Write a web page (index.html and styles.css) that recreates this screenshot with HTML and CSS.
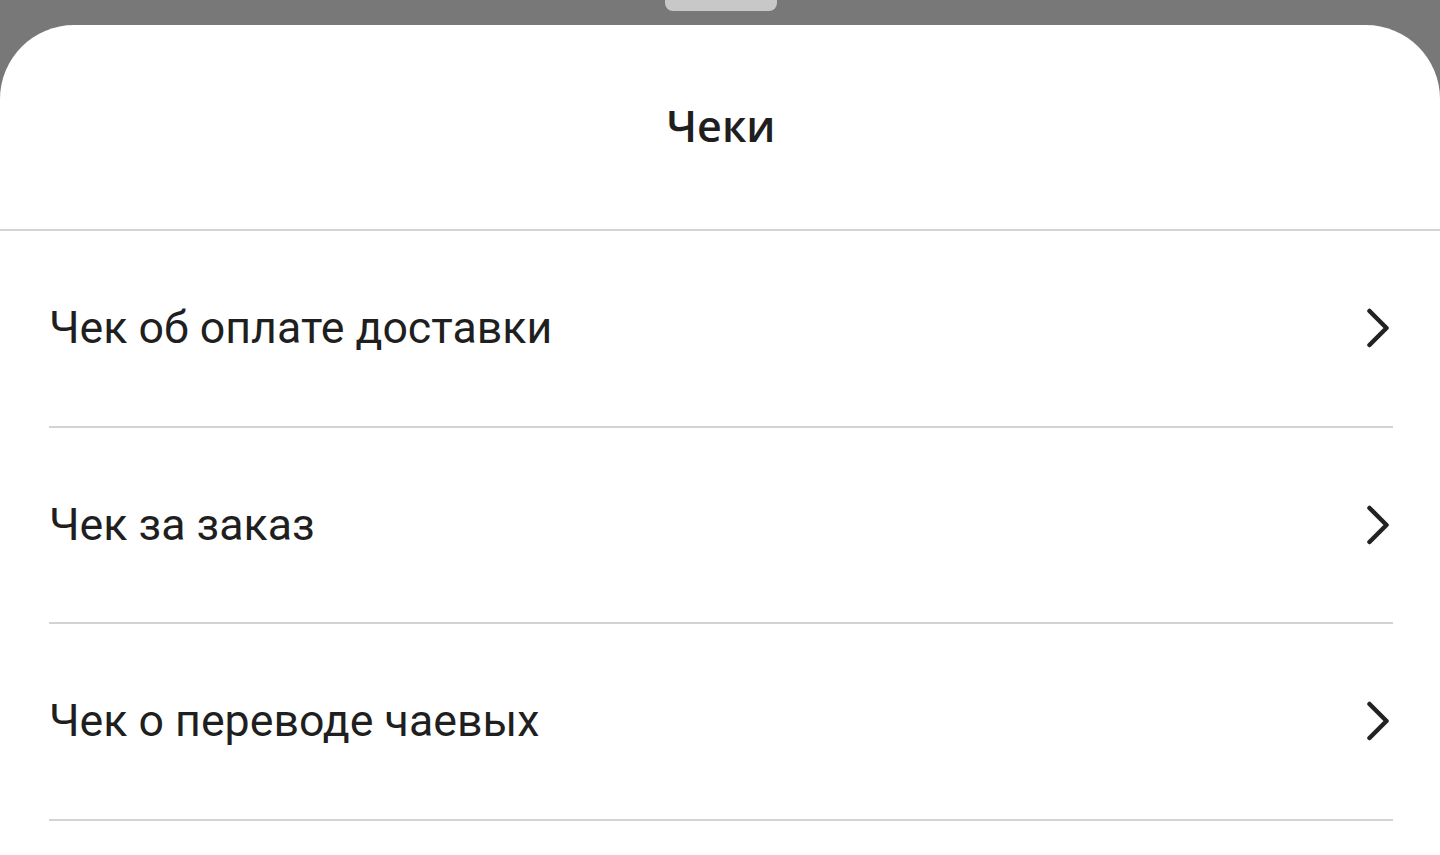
FILE: index.html
```html
<!DOCTYPE html>
<html lang="ru">
<head>
<meta charset="utf-8">
<title>Чеки</title>
<link rel="stylesheet" href="styles.css">
</head>
<body>
<div class="screen">
  <div class="handle"></div>
  <div class="sheet">
    <header class="sheet-header">
      <h1 class="title">Чеки</h1>
    </header>
    <ul class="list">
      <li class="row">
        <span class="row-label">Чек об оплате доставки</span>
        <svg class="chevron" viewBox="0 0 24 40" width="24" height="40"><path d="M3.5 3 L20.5 20 L3.5 37" fill="none" stroke="#222" stroke-width="4.5" stroke-linecap="round" stroke-linejoin="round"/></svg>
      </li>
      <li class="row">
        <span class="row-label">Чек за заказ</span>
        <svg class="chevron" viewBox="0 0 24 40" width="24" height="40"><path d="M3.5 3 L20.5 20 L3.5 37" fill="none" stroke="#222" stroke-width="4.5" stroke-linecap="round" stroke-linejoin="round"/></svg>
      </li>
      <li class="row">
        <span class="row-label">Чек о переводе чаевых</span>
        <svg class="chevron" viewBox="0 0 24 40" width="24" height="40"><path d="M3.5 3 L20.5 20 L3.5 37" fill="none" stroke="#222" stroke-width="4.5" stroke-linecap="round" stroke-linejoin="round"/></svg>
      </li>
    </ul>
  </div>
</div>
</body>
</html>
```
FILE: styles.css
```css
* { box-sizing: border-box; }
html, body { margin: 0; padding: 0; }
body {
  background: #787878;
  width: 1440px;
  height: 855px;
  overflow: hidden;
  font-family: Roboto, "Noto Sans", sans-serif;
  color: #222;
}
.screen {
  position: relative;
  height: 855px;
  padding-top: 25px;
}
.handle {
  position: absolute;
  top: -11px;
  left: 665px;
  width: 112px;
  height: 22px;
  border-radius: 8px;
  background: #c8c8c8;
}
.sheet {
  background: #fff;
  height: 830px;
  border-radius: 74px 74px 0 0;
}
.sheet-header {
  height: 206px;
  border-bottom: 2px solid #d4d4d4;
  display: flex;
  align-items: center;
  justify-content: center;
  padding-bottom: 4px;
}
.title {
  margin: 0;
  font-family: "Open Sans", "Noto Sans", sans-serif;
  font-weight: 600;
  font-size: 43px;
  color: #1f1f1f;
  padding-left: 2px;
}
.list {
  list-style: none;
  margin: 0;
  padding: 0 47px 0 49px;
}
.row {
  height: 196.5px;
  border-bottom: 2px solid #d3d3d0;
  display: flex;
  align-items: center;
  justify-content: space-between;
}
.row-label {
  font-size: 44.7px;
  font-weight: 400;
  color: #1f1f1f;
}
.chevron {
  margin-right: 3px;
}
```
